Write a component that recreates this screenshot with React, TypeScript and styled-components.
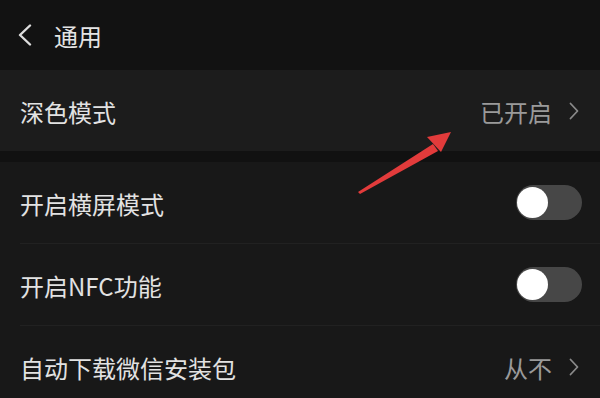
import React from 'react';
import styled, { createGlobalStyle } from 'styled-components';

const GlobalStyle = createGlobalStyle`
  html, body {
    margin: 0;
    padding: 0;
    background: #181818;
  }
  body {
    font-family: "Noto Sans CJK SC", "Noto Sans", sans-serif;
  }
`;

const Screen = styled.div`
  position: relative;
  width: 600px;
  height: 398px;
  overflow: hidden;
  background: #181818;
`;

const Header = styled.header`
  display: flex;
  align-items: center;
  gap: 21px;
  height: 70px;
  padding: 0 0 0 17px;
  background: #121212;
  color: #e4e4e4;
  font-size: 24px;
`;

const Section = styled.section<{ $bg: string }>`
  background: ${(p) => p.$bg};
`;

const Gap = styled.div`
  height: 11px;
  background: #111111;
`;

const Row = styled.div<{ $divider?: boolean }>`
  display: flex;
  align-items: center;
  justify-content: space-between;
  height: 81px;
  margin-left: 20px;
  padding-right: 21px;
  border-bottom: ${(p) => (p.$divider ? '1px solid #212121' : 'none')};
`;

const Label = styled.span`
  color: #e2e2e2;
  font-size: 24px;
  padding-top: 1px;
`;

const Value = styled.span`
  display: flex;
  align-items: center;
  gap: 17px;
  color: #9a9a9a;
  font-size: 24px;
  padding-top: 1px;
`;

const Toggle = styled.div`
  position: relative;
  width: 66px;
  height: 35px;
  border-radius: 18px;
  background: #474747;
  margin-right: -3px;
  &::after {
    content: '';
    position: absolute;
    left: 1px;
    top: 2px;
    width: 31px;
    height: 31px;
    border-radius: 50%;
    background: #ffffff;
  }
`;

const ArrowMark = styled.svg`
  position: absolute;
  left: 350px;
  top: 120px;
`;

function Chevron({ left }: { left?: boolean }) {
  if (left) {
    return (
      <svg width="16" height="22" viewBox="0 0 16 22">
        <path d="M13 1.5 L3 11 L13 20.5" fill="none" stroke="#dddddd" strokeWidth="2.4" strokeLinecap="round" strokeLinejoin="round" />
      </svg>
    );
  }
  return (
    <svg width="10" height="18" viewBox="0 0 10 18">
      <path d="M1.5 1.5 L8.5 9 L1.5 16.5" fill="none" stroke="#8a8a8a" strokeWidth="1.8" strokeLinecap="round" strokeLinejoin="round" />
    </svg>
  );
}

function App() {
  return (
    <Screen>
      <GlobalStyle />
      <Header>
        <Chevron left />
        <span>通用</span>
      </Header>
      <Section $bg="#1c1c1c">
        <Row>
          <Label>深色模式</Label>
          <Value>
            已开启
            <Chevron />
          </Value>
        </Row>
      </Section>
      <Gap />
      <Section $bg="#181818">
        <Row $divider>
          <Label>开启横屏模式</Label>
          <Toggle />
        </Row>
        <Row $divider>
          <Label>开启NFC功能</Label>
          <Toggle />
        </Row>
        <Row>
          <Label>自动下载微信安装包</Label>
          <Value>
            从不
            <Chevron />
          </Value>
        </Row>
      </Section>
      <ArrowMark width="110" height="80" viewBox="0 0 110 80">
        <polygon points="8,72 83,24 88,31 10,74" fill="#e23b3b" />
        <polygon points="101,12 77,17 91,32" fill="#e23b3b" />
      </ArrowMark>
    </Screen>
  );
}

export default App;
